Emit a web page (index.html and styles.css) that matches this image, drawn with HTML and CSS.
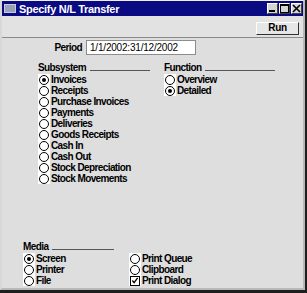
FILE: index.html
```html
<!DOCTYPE html>
<html lang="en">
<head>
    <meta charset="UTF-8">
    <title>Specify N/L Transfer</title>
    <link rel="stylesheet" href="styles.css">
</head>
<body>
    <div class="window">
        <div class="titlebar">
            <span class="appIcon"></span>
            <span class="titleText">Specify N/L Transfer</span>
            <div class="winButtons">
                <span class="winBtn">
                    <svg width="9" height="9" viewBox="0 0 9 9"><rect x="1" y="6" width="6" height="2" fill="#000"/></svg>
                </span>
                <span class="winBtn">
                    <svg width="9" height="9" viewBox="0 0 9 9"><rect x="0.5" y="0.5" width="8" height="8" fill="none" stroke="#000"/><rect x="0" y="0" width="9" height="2" fill="#000"/></svg>
                </span>
                <span class="winBtn">
                    <svg width="9" height="9" viewBox="0 0 9 9"><path d="M1 1 L8 8 M8 1 L1 8" stroke="#000" stroke-width="1.6"/></svg>
                </span>
            </div>
        </div>

        <div class="toolbar">
            <button class="runBtn">Run</button>
        </div>

        <div class="content">
            <div class="periodRow">
                <label class="periodLabel">Period</label>
                <div class="field">1/1/2002:31/12/2002</div>
            </div>

            <div class="groups">
                <!-- Subsystem -->
                <div class="group subsystem">
                    <div class="groupHead">Subsystem <span class="rule"></span></div>
                    <div class="opt"><span class="mark"><span class="radio on"></span></span>Invoices</div>
                    <div class="opt"><span class="mark"><span class="radio"></span></span>Receipts</div>
                    <div class="opt"><span class="mark"><span class="radio"></span></span>Purchase Invoices</div>
                    <div class="opt"><span class="mark"><span class="radio"></span></span>Payments</div>
                    <div class="opt"><span class="mark"><span class="radio"></span></span>Deliveries</div>
                    <div class="opt"><span class="mark"><span class="radio"></span></span>Goods Receipts</div>
                    <div class="opt"><span class="mark"><span class="radio"></span></span>Cash In</div>
                    <div class="opt"><span class="mark"><span class="radio"></span></span>Cash Out</div>
                    <div class="opt"><span class="mark"><span class="radio"></span></span>Stock Depreciation</div>
                    <div class="opt"><span class="mark"><span class="radio"></span></span>Stock Movements</div>
                </div>

                <!-- Function -->
                <div class="group function">
                    <div class="groupHead">Function <span class="rule"></span></div>
                    <div class="opt"><span class="mark"><span class="radio"></span></span>Overview</div>
                    <div class="opt"><span class="mark"><span class="radio on"></span></span>Detailed</div>
                </div>
            </div>

            <!-- Media -->
            <div class="group media">
                <div class="groupHead">Media <span class="rule"></span></div>
                <div class="mediaCols">
                    <div class="mediaCol">
                        <div class="opt"><span class="mark"><span class="radio on"></span></span>Screen</div>
                        <div class="opt"><span class="mark"><span class="radio"></span></span>Printer</div>
                        <div class="opt"><span class="mark"><span class="radio"></span></span>File</div>
                    </div>
                    <div class="mediaCol">
                        <div class="opt"><span class="mark"><span class="radio"></span></span>Print Queue</div>
                        <div class="opt"><span class="mark"><span class="radio"></span></span>Clipboard</div>
                        <div class="opt"><span class="mark"><span class="check">
                            <svg width="9" height="9" viewBox="0 0 9 9"><path d="M1.5 4.5 L3.5 7 L7.5 1.5" fill="none" stroke="#000" stroke-width="1.5"/></svg>
                        </span></span>Print Dialog</div>
                    </div>
                </div>
            </div>
        </div>
    </div>
</body>
</html>
```

FILE: styles.css
```css
html, body {
    margin: 0;
    padding: 0;
}

body {
    width: 307px;
    height: 293px;
    background-color: #1e1e1e;
    font-family: "Liberation Sans", Arial, sans-serif;
    font-size: 10px;
    font-weight: bold;
    letter-spacing: -0.6px;
    color: #000;
    overflow: hidden;
}

.window {
    box-sizing: border-box;
    width: 305px;
    height: 290px;
    border-top: 1px solid #f0f0f0;
    border-left: 2px solid #d8d8d8;
    border-right: 2px solid #b8b8b8;
    border-bottom: 2px solid #b8b8b8;
    background-color: #dedede;
    display: flex;
    flex-direction: column;
}

.titlebar {
    height: 15px;
    background-color: #0a0a82;
    color: white;
    display: flex;
    align-items: center;
}

.appIcon {
    width: 12px;
    height: 9px;
    margin: 0 3px 0 2px;
    background-color: #9aa0b8;
    border: 1px solid #c8ccd8;
    box-sizing: border-box;
}

.titleText {
    font-size: 11px;
    letter-spacing: -0.3px;
}

.winButtons {
    margin-left: auto;
    margin-right: 1px;
    display: flex;
    gap: 1px;
}

.winBtn {
    width: 11px;
    height: 11px;
    box-sizing: border-box;
    background-color: #d4d4d4;
    border: 1px solid;
    border-color: #fff #404040 #404040 #fff;
    display: flex;
    align-items: center;
    justify-content: center;
}

.toolbar {
    height: 21px;
    display: flex;
    justify-content: flex-end;
    align-items: center;
    background-color: #e2e2e2;
    border-bottom: 1px solid #8a8a8a;
    box-shadow: 0 1px 0 #f4f4f4;
}

.runBtn {
    width: 43px;
    height: 13px;
    margin-right: 4px;
    margin-top: 3px;
    padding: 0;
    font-family: inherit;
    font-size: 10px;
    font-weight: bold;
    letter-spacing: -0.3px;
    background-color: #e6e6e6;
    border: 1px solid;
    border-color: #fff #303030 #303030 #fff;
    line-height: 10px;
}

.content {
    flex: 1;
    display: flex;
    flex-direction: column;
    background-color: #dedede;
}

.periodRow {
    display: flex;
    align-items: center;
    margin-top: 2px;
}

.periodLabel {
    width: 80px;
    text-align: right;
    margin-right: 4px;
}

.field {
    box-sizing: border-box;
    width: 110px;
    height: 15px;
    background-color: white;
    border: 1px solid #8c8c8c;
    font-weight: normal;
    letter-spacing: -0.2px;
    padding-left: 3px;
    line-height: 13px;
}

.groups {
    display: flex;
    margin-top: 7px;
}

.groupHead {
    display: flex;
    align-items: center;
    height: 11px;
    margin-bottom: 1px;
}

.rule {
    height: 1px;
    background-color: #555;
    margin-left: 4px;
    margin-top: 5px;
}

.subsystem {
    margin-left: 36px;
    width: 126px;
}

.subsystem .rule {
    width: 60px;
}

.function .rule {
    width: 70px;
}

.opt {
    display: flex;
    align-items: center;
    height: 11px;
}

.mark {
    width: 12px;
    height: 11px;
    background-color: white;
    display: flex;
    align-items: center;
    justify-content: center;
    margin-right: 1px;
}

.radio {
    box-sizing: border-box;
    width: 10px;
    height: 10px;
    border-radius: 50%;
    border: 1px solid #000;
    background-color: white;
    display: flex;
    align-items: center;
    justify-content: center;
}

.radio.on::after {
    content: "";
    width: 4px;
    height: 4px;
    border-radius: 50%;
    background-color: #000;
}

.check {
    box-sizing: border-box;
    width: 10px;
    height: 10px;
    border: 1px solid #000;
    display: flex;
    align-items: center;
    justify-content: center;
}

.media {
    margin-top: auto;
    margin-left: 21px;
    margin-bottom: 2px;
}

.media .rule {
    width: 62px;
}

.mediaCols {
    display: flex;
}

.mediaCol {
    width: 106px;
}
```
